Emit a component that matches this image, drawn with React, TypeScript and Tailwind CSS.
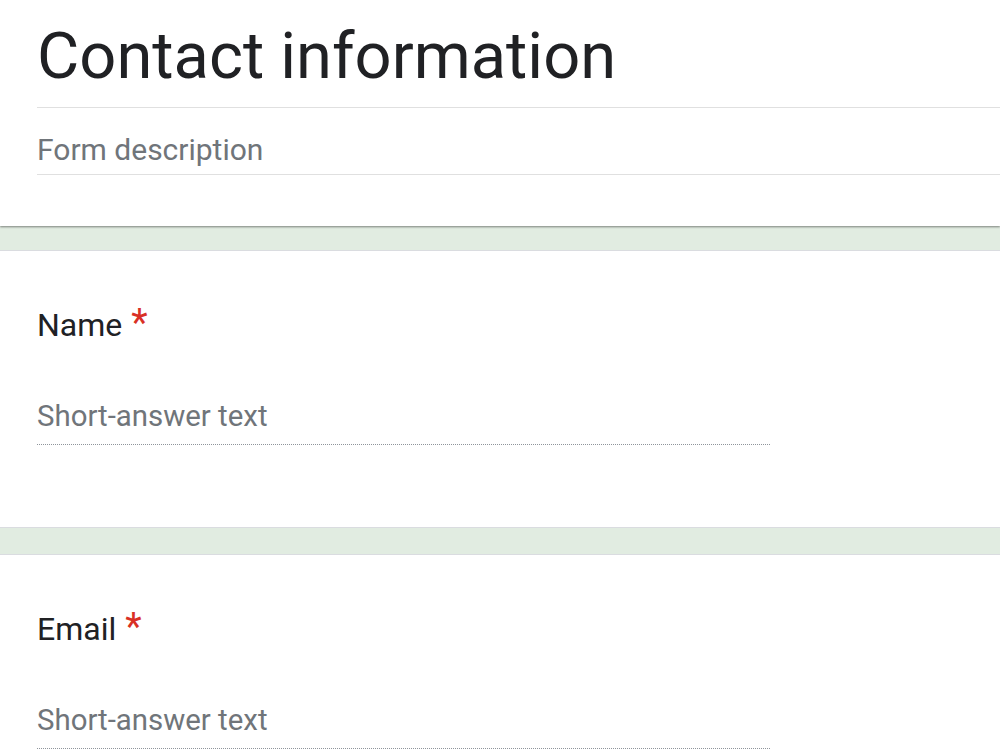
const font = { fontFamily: 'Roboto, "Liberation Sans", Arial, sans-serif' };

function Question({ label }: { label: string }) {
  return (
    <section className="bg-white border-y border-[#dadce0] pl-[37px] pt-[54px] pb-[82px]">
      <h2 className="text-[32px] leading-[40px] text-[#202124]">
        {label}
        <span className="ml-[9px] text-[38px] leading-[0] text-[#d93025]">*</span>
      </h2>
      <div className="mt-[53px] w-[733px] border-b border-dotted border-[#8f959b] pb-[10px] text-[29.4px] leading-[36px] text-[#70757a]">
        Short-answer text
      </div>
    </section>
  );
}

export default function App() {
  return (
    <div className="h-[750px] w-[1000px] overflow-hidden bg-[#e1ece1]" style={font}>
      {/* form header card */}
      <header className="relative z-10 bg-white pl-[37px] pt-[21px] pb-[51px] shadow-[0_1px_2px_rgba(0,0,0,0.45)]">
        <h1 className="border-b border-[#e0e0e0] pb-[16px] text-[65px] leading-[70px] text-[#202124]">
          Contact information
        </h1>
        <p className="mt-[22px] border-b border-[#e0e0e0] pb-[4px] text-[30px] leading-[40px] text-[#70757a]">
          Form description
        </p>
      </header>

      <div className="mt-[24px] flex flex-col gap-[26px]">
        <Question label="Name" />
        <Question label="Email" />
      </div>
    </div>
  );
}
